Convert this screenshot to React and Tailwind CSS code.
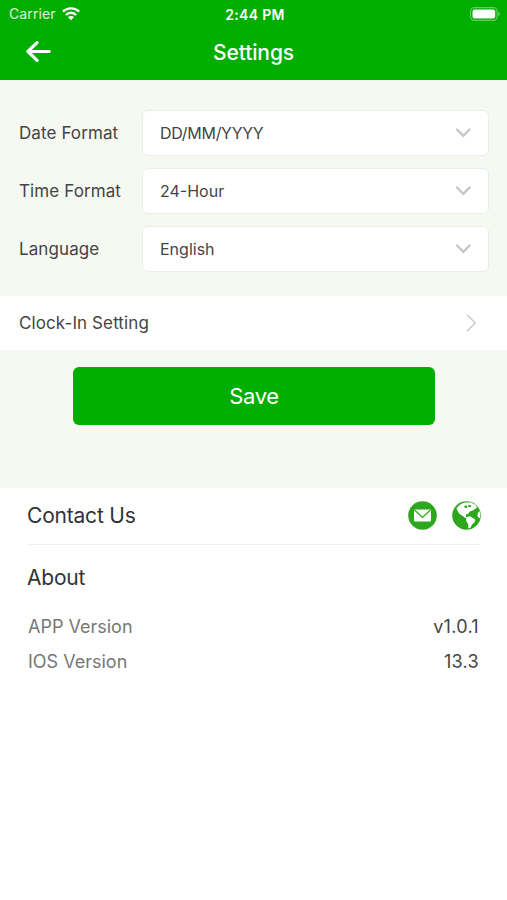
import React from 'react';

const formats = [
  { label: 'Date Format', value: 'DD/MM/YYYY', spacing: 'tracking-[-0.3px]' },
  { label: 'Time Format', value: '24-Hour', spacing: 'tracking-normal' },
  { label: 'Language', value: 'English', spacing: 'tracking-normal' },
];

const versions = [
  { label: 'APP Version', value: 'v1.0.1' },
  { label: 'IOS Version', value: '13.3' },
];

const WifiIcon = () => (
  <svg width="18" height="14" viewBox="0 0 18 14" fill="none" stroke="#fff" strokeWidth="2.4">
    <path d="M0.9 4.7C5.2 0.2 12.8 0.2 17.1 4.7" />
    <path d="M3.9 8C6.7 5 11.3 5 14.1 8" />
    <path d="M9 13.3L5.9 10.1C7.6 8.5 10.4 8.5 12.1 10.1Z" fill="#fff" stroke="none" />
  </svg>
);

const BatteryIcon = () => (
  <svg width="31" height="14" viewBox="0 0 31 14">
    <rect x="0.6" y="0.6" width="26.5" height="12.8" rx="3.6" fill="none" stroke="#fff" strokeOpacity="0.4" strokeWidth="1.1" />
    <rect x="2.5" y="2.5" width="22.7" height="9" rx="2" fill="#fff" />
    <path d="M28.3 4.8C30.2 5.4 30.2 8.6 28.3 9.2Z" fill="#fff" fillOpacity="0.45" />
  </svg>
);

const BackIcon = () => (
  <svg width="26" height="22" viewBox="0 0 26 22" fill="none" stroke="#fff" strokeWidth="3.2" strokeLinecap="round" strokeLinejoin="round">
    <path d="M12 1.6L2.9 10.5L12 19.4M3.3 10.5H24.2" />
  </svg>
);

const ChevronDown = () => (
  <svg width="16" height="11" viewBox="0 0 16 11" fill="none" stroke="#c4c4cc" strokeWidth="2.3" strokeLinecap="round">
    <path d="M2 1.5L8.3 7.9L14.6 1.5" />
  </svg>
);

const ChevronRight = () => (
  <svg width="11" height="18" viewBox="0 0 11 18" fill="none" stroke="#c8c8c8" strokeWidth="1.4">
    <path d="M1 0.8L9.3 9L1 17.2" />
  </svg>
);

const MailIcon = () => (
  <svg width="29" height="29" viewBox="0 0 29 29">
    <circle cx="14.5" cy="14.5" r="14.3" fill="#2da81e" />
    <rect x="6" y="8.6" width="17" height="12" rx="1" fill="#fff" />
    <path d="M6.6 9L14.5 16.4L22.4 9" fill="none" stroke="#2da81e" strokeWidth="1.2" />
  </svg>
);

const GlobeIcon = () => (
  <svg width="29" height="29" viewBox="0 0 29 29">
    <circle cx="14.5" cy="14.5" r="14.3" fill="#2da81e" />
    <g fill="#fff">
      <path d="M4.4 7.2C6.8 4 9.6 2.1 12.8 1.4L19 1.4L23.6 4L25 6.8L22.6 8.2L20.2 9.8L17.8 10.6L16.4 12.4L14.2 13.6L13.5 15.1L15.2 16.7L13.3 16.9L10.8 14.9L7.8 13.2L6 10.8L5.2 9Z" />
      <path d="M15 16L18 15.3L20.4 16.8L23.4 18.8L22.4 21.5L20 23.4L18.4 26.7L16.3 27.4L16.3 23.6L14.6 20.8L14 18.5Z" />
      <path d="M27.8 10L25.8 12L25.4 15.3L27.6 17.5C28.4 15 28.4 12.5 27.8 10Z" />
    </g>
    <path d="M11.8 5.3L14.6 4.2L15.4 6.6L13.4 7.3ZM16.6 3.7L19.4 4.5L18.2 6.3L16 5.8Z" fill="#2da81e" />
  </svg>
);

const SettingsScreen = () => {
  return (
    <div className="flex h-[900px] w-full flex-col bg-white font-['Inter',sans-serif] text-[#444]">
      <header className="h-20 bg-[#00ae00] text-white">
        <div className="grid h-[27px] grid-cols-3 items-center pl-[9px] pr-[6px] text-[13px]">
          <div className="flex items-center gap-[6px]">
            <span className="text-[14px] tracking-[0.1px] text-white/85">Carrier</span>
            <WifiIcon />
          </div>
          <span className="pt-px text-center text-[14px] font-semibold tracking-[0.3px]">2:44 PM</span>
          <div className="flex justify-end"><BatteryIcon /></div>
        </div>
        <div className="grid h-[50px] grid-cols-[80px_1fr_80px] items-center">
          <button className="pl-[25px]" aria-label="Back"><BackIcon /></button>
          <h1 className="pt-px text-center text-[21px] font-medium tracking-[-0.1px]">Settings</h1>
        </div>
      </header>

      <main className="h-[408px] bg-[#f6f9f2]">
        <div className="flex h-[216px] flex-col gap-3 pl-[19px] pr-[18px] pt-[30px]">
          {formats.map((f) => (
            <div key={f.label} className="flex h-[46px] items-center">
              <span className="w-[123px] pt-[2px] text-[17px] tracking-[0.1px]">{f.label}</span>
              <div className="flex h-full flex-1 items-center justify-between rounded-md border border-[#ebedea] bg-white pl-[17px] pr-[17px]">
                <span className={`text-[16px] ${f.spacing}`}>{f.value}</span>
                <ChevronDown />
              </div>
            </div>
          ))}
        </div>
        <div className="flex h-[54px] items-center justify-between bg-white pl-[19px] pr-[30px]">
          <span className="pt-[2px] text-[17px] tracking-[0.1px]">Clock-In Setting</span>
          <ChevronRight />
        </div>
        <button className="mx-auto mt-[17px] block h-[58px] w-[362px] rounded-md bg-[#00ae00] pl-px pt-px text-[22px] tracking-[-0.3px] text-white">
          Save
        </button>
      </main>

      <section className="px-[27px]">
        <div className="flex h-[57px] items-center justify-between border-b border-[#f1f1f1] text-[#333]">
          <h2 className="text-[21px] tracking-[-0.2px]">Contact Us</h2>
          <div className="-mr-px flex gap-[15px] pb-[2px]">
            <MailIcon />
            <GlobeIcon />
          </div>
        </div>
        <h2 className="flex h-[64px] items-center pt-[2px] text-[21px] tracking-[-0.2px] text-[#333]">About</h2>
        {versions.map((v) => (
          <div key={v.label} className="flex h-[35px] items-center justify-between pl-px pr-px text-[18px]">
            <span className="text-[#777]">{v.label}</span>
            <span className="tracking-[0.3px]">{v.value}</span>
          </div>
        ))}
      </section>
    </div>
  );
};

export default SettingsScreen;
